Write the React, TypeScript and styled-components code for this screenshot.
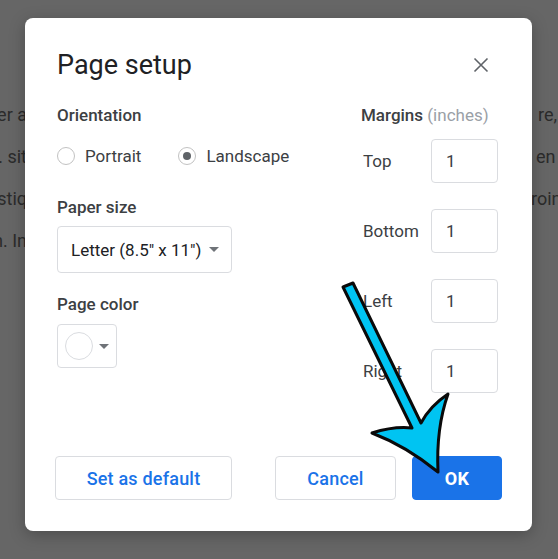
import styled, { createGlobalStyle } from "styled-components"

const GlobalStyle = createGlobalStyle`
    html, body {
        margin: 0;
        padding: 0;
        background: #666666;
    }
    body {
        font-family: Roboto, "Liberation Sans", Arial, sans-serif;
        overflow: hidden;
    }
`

const backdropLines = [
    { left: "rather a", right: "re,", indent: 7 },
    { left: "amet. sit", right: "en", indent: 5 },
    { left: "rustiq", right: "roin", indent: 0 },
    { left: "ipsum. In", right: "", indent: 0 },
]

const marginRows = ["Top", "Bottom", "Left", "Right"]

export default function App() {
    return (
        <Screen>
            <GlobalStyle />
            <Backdrop>
                {backdropLines.map((line) => (
                    <BackdropLine key={line.left}>
                        <LeftPiece>
                            <span>{line.left}</span>
                        </LeftPiece>
                        <RightPiece indent={line.indent}>{line.right}</RightPiece>
                    </BackdropLine>
                ))}
            </Backdrop>

            <Dialog>
                <Header>
                    <Title>Page setup</Title>
                    <CloseButton aria-label="Close">
                        <svg width="16" height="16" viewBox="0 0 16 16">
                            <path d="M1.5 1.5 L14.5 14.5 M14.5 1.5 L1.5 14.5" stroke="#5f6368" strokeWidth="1.6" fill="none" />
                        </svg>
                    </CloseButton>
                </Header>

                <Body>
                    <LeftColumn>
                        <Label>Orientation</Label>
                        <RadioRow>
                            <RadioOption>
                                <Radio />
                                <span>Portrait</span>
                            </RadioOption>
                            <RadioOption>
                                <Radio checked />
                                <span>Landscape</span>
                            </RadioOption>
                        </RadioRow>

                        <Label spaced>Paper size</Label>
                        <Select>
                            <span>Letter (8.5" x 11")</span>
                            <Caret />
                        </Select>

                        <Label spaced>Page color</Label>
                        <ColorButton>
                            <Swatch />
                            <Caret />
                        </ColorButton>
                    </LeftColumn>

                    <RightColumn>
                        <Label>
                            Margins <Hint>(inches)</Hint>
                        </Label>
                        <MarginList>
                            {marginRows.map((name) => (
                                <MarginRow key={name}>
                                    <MarginName>{name}</MarginName>
                                    <MarginInput>1</MarginInput>
                                </MarginRow>
                            ))}
                        </MarginList>
                    </RightColumn>
                </Body>

                <Footer>
                    <Button width="177px">Set as default</Button>
                    <Spacer />
                    <Button width="121px">Cancel</Button>
                    <Button width="90px" primary>OK</Button>
                </Footer>
            </Dialog>

            <ArrowLayer width="558" height="559" viewBox="0 0 558 559">
                <path
                    d="M343 287 L353 283 L421 423 Q430 406 448 394 Q436 428 438 472 Q406 446 372 433 Q394 426 412 428 Z"
                    fill="#00c4f2"
                    stroke="#0a0a0a"
                    strokeWidth="3"
                    strokeLinejoin="round"
                />
            </ArrowLayer>
        </Screen>
    )
}

const Screen = styled.div`
    position: relative;
    width: 558px;
    height: 559px;
    overflow: hidden;
    background: #666666;
`

const Backdrop = styled.div`
    display: flex;
    flex-direction: column;
    padding-top: 94px;
    color: #2b2b2b;
    font-size: 18px;
    line-height: 42px;
`

const BackdropLine = styled.div`
    display: flex;
    justify-content: space-between;
`

const LeftPiece = styled.div`
    display: flex;
    justify-content: flex-end;
    width: 27px;
    overflow: hidden;
    white-space: nowrap;
`

const RightPiece = styled.div<{ indent: number }>`
    width: 27px;
    padding-left: ${(p) => p.indent}px;
    box-sizing: border-box;
    white-space: nowrap;
`

const Dialog = styled.div`
    position: absolute;
    left: 25px;
    top: 18px;
    width: 507px;
    height: 513px;
    box-sizing: border-box;
    padding: 25px 30px 31px;
    display: flex;
    flex-direction: column;
    background: #ffffff;
    border-radius: 8px;
    box-shadow: 0 4px 16px rgba(0, 0, 0, 0.25);
    color: #3c4043;
`

const Header = styled.div`
    display: flex;
    align-items: center;
    justify-content: space-between;
    height: 44px;
    padding-left: 2px;
`

const Title = styled.h1`
    margin: 0;
    font-size: 27px;
    font-weight: 400;
    line-height: 44px;
    color: #202124;
`

const CloseButton = styled.button`
    display: flex;
    align-items: center;
    justify-content: center;
    width: 28px;
    height: 28px;
    margin-right: 7px;
    padding: 0;
    border: none;
    background: transparent;
`

const Body = styled.div`
    display: grid;
    grid-template-columns: 1fr 141px;
    margin-top: 13px;
    padding-left: 2px;
`

const LeftColumn = styled.div`
    display: flex;
    flex-direction: column;
    align-items: flex-start;
`

const RightColumn = styled.div`
    display: flex;
    flex-direction: column;
`

const Label = styled.div<{ spaced?: boolean }>`
    height: 30px;
    line-height: 30px;
    margin-top: ${(p) => (p.spaced ? "16px" : "0")};
    font-size: 17px;
    font-weight: 500;
    color: #3c4043;
    white-space: nowrap;
`

const Hint = styled.span`
    font-weight: 400;
    color: #9aa0a6;
`

const RadioRow = styled.div`
    display: flex;
    gap: 37px;
    height: 40px;
    margin-top: 6px;
    align-items: center;
`

const RadioOption = styled.label`
    display: flex;
    align-items: center;
    gap: 10px;
    font-size: 17px;
    color: #3c4043;
`

const Radio = styled.span<{ checked?: boolean }>`
    position: relative;
    width: 18px;
    height: 18px;
    box-sizing: border-box;
    border: 1.5px solid #c2c2c2;
    border-radius: 50%;

    &::after {
        content: "";
        display: ${(p) => (p.checked ? "block" : "none")};
        position: absolute;
        left: 50%;
        top: 50%;
        width: 8px;
        height: 8px;
        margin: -4px 0 0 -4px;
        border-radius: 50%;
        background: #5f6368;
    }
`

const Select = styled.div`
    display: flex;
    align-items: center;
    gap: 8px;
    height: 47px;
    margin-top: 4px;
    padding: 0 12px 0 13px;
    box-sizing: border-box;
    border: 1px solid #dadce0;
    border-radius: 4px;
    font-size: 17px;
    color: #202124;
    white-space: nowrap;
`

const Caret = styled.span`
    width: 0;
    height: 0;
    border-left: 5px solid transparent;
    border-right: 5px solid transparent;
    border-top: 5px solid #6f7378;
`

const ColorButton = styled.div`
    display: flex;
    align-items: center;
    gap: 6px;
    width: 60px;
    height: 44px;
    margin-top: 5px;
    padding-left: 7px;
    box-sizing: border-box;
    border: 1px solid #dadce0;
    border-radius: 4px;
`

const Swatch = styled.span`
    width: 28px;
    height: 28px;
    box-sizing: border-box;
    border: 1px solid #dadce0;
    border-radius: 50%;
    background: #ffffff;
`

const MarginList = styled.div`
    display: flex;
    flex-direction: column;
    gap: 26px;
    margin-top: 9px;
`

const MarginRow = styled.div`
    display: flex;
    align-items: center;
    justify-content: space-between;
    padding-right: 4px;
`

const MarginName = styled.span`
    padding-left: 2px;
    font-size: 17px;
    color: #3c4043;
`

const MarginInput = styled.div`
    width: 67px;
    height: 44px;
    box-sizing: border-box;
    padding-left: 14px;
    border: 1px solid #dadce0;
    border-radius: 4px;
    font-size: 17px;
    line-height: 42px;
    color: #3c4043;
`

const Footer = styled.div`
    display: flex;
    align-items: center;
    gap: 16px;
    margin-top: auto;
`

const Spacer = styled.div`
    flex: 1;
`

const Button = styled.button<{ width: string; primary?: boolean }>`
    width: ${(p) => p.width};
    height: 44px;
    padding: 0;
    border: 1px solid ${(p) => (p.primary ? "#1a73e8" : "#dadce0")};
    border-radius: 4px;
    background: ${(p) => (p.primary ? "#1a73e8" : "#ffffff")};
    color: ${(p) => (p.primary ? "#ffffff" : "#1a73e8")};
    font-family: Roboto, "Liberation Sans", Arial, sans-serif;
    font-size: 18px;
    font-weight: ${(p) => (p.primary ? 700 : 500)};
    letter-spacing: 0.2px;
`

const ArrowLayer = styled.svg`
    position: absolute;
    left: 0;
    top: 0;
    pointer-events: none;
`
